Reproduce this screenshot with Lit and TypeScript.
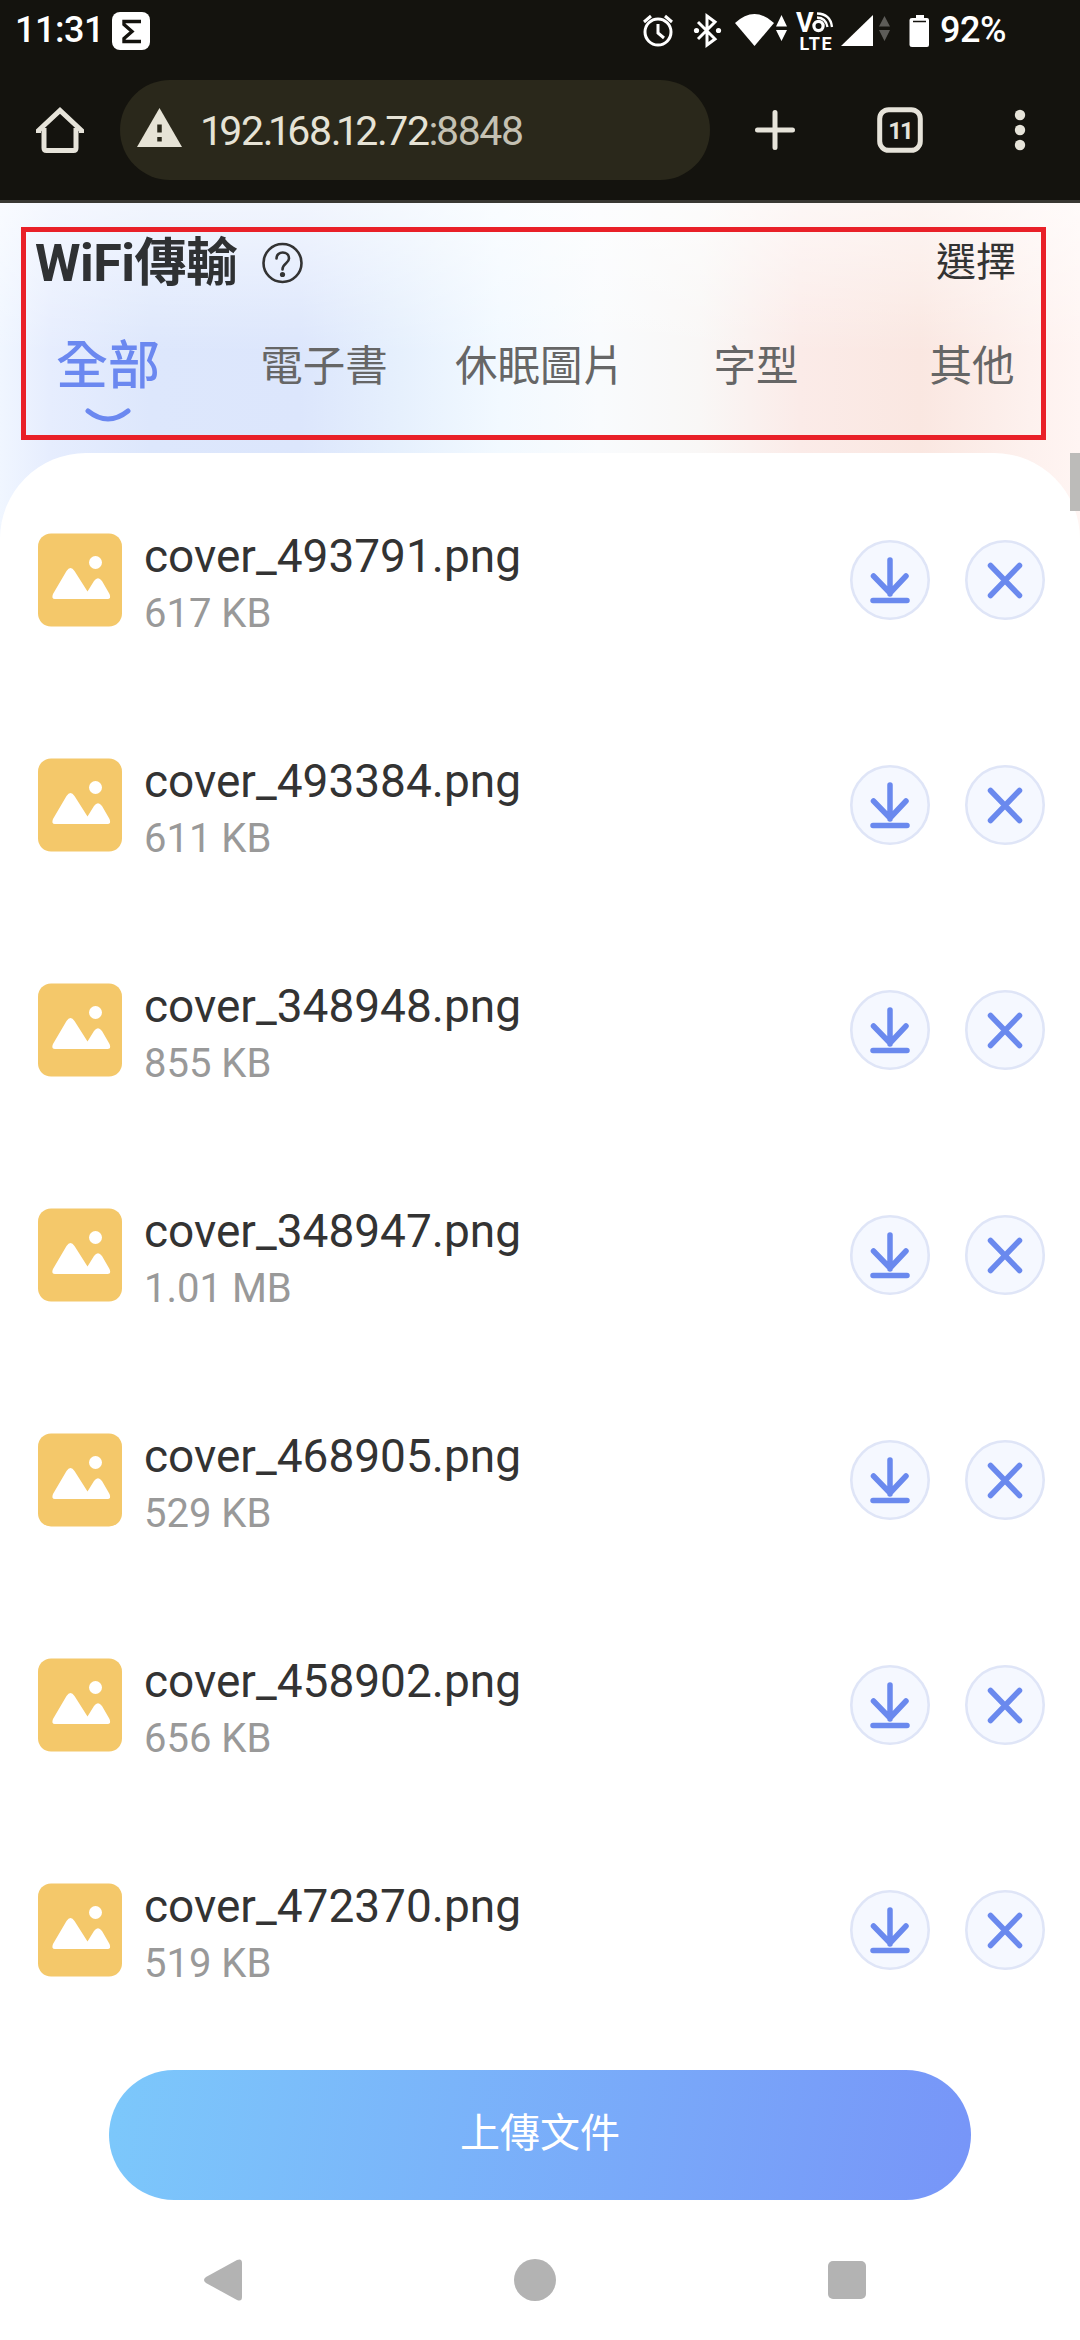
import { LitElement, html, css, svg } from "lit";
import { customElement, property } from "lit/decorators.js";

interface FileItem {
  name: string;
  size: string;
}

const FILES: FileItem[] = [
  { name: "cover_493791.png", size: "617 KB" },
  { name: "cover_493384.png", size: "611 KB" },
  { name: "cover_348948.png", size: "855 KB" },
  { name: "cover_348947.png", size: "1.01 MB" },
  { name: "cover_468905.png", size: "529 KB" },
  { name: "cover_458902.png", size: "656 KB" },
  { name: "cover_472370.png", size: "519 KB" },
];

const TABS = ["全部", "電子書", "休眠圖片", "字型", "其他"];

@customElement("status-bar")
class StatusBar extends LitElement {
  static styles = css`
    :host {
      display: flex;
      align-items: flex-start;
      height: 60px;
      color: #fff;
      font: 500 36px/42px Roboto, sans-serif;
    }
    .time {
      width: 97px;
      padding: 9px 0 0 15px;
      letter-spacing: -0.5px;
      white-space: nowrap;
    }
    .icons {
      display: block;
    }
    .lte {
      font: 700 18px Roboto, sans-serif;
    }
    .volte {
      font: 700 27px Roboto, sans-serif;
    }
    .level {
      padding: 9px 0 0 8px;
      letter-spacing: -0.5px;
    }
  `;
  render() {
    return html`
      <span class="time">11:31</span>
      <svg class="icons" width="820" height="60" viewBox="112 0 820 60" fill="#fff">
        <rect x="112" y="12" width="38" height="38" rx="8" />
        <path d="M141 21.500H124v3l8 7-8 7v3h17" fill="none" stroke="#14130e" stroke-width="3.400" />
        <g fill="none" stroke="#fff" stroke-width="3">
          <circle cx="658" cy="32" r="13" />
          <path d="M658 24v9l6 5M644 22l7-6M672 22l-7-6" />
        </g>
        <path d="M698 22l17 17-8 6V16l8 6-17 17" fill="none" stroke="#fff" stroke-width="3" />
        <circle cx="696.500" cy="30.500" r="2.600" />
        <circle cx="718.500" cy="30.500" r="2.600" />
        <path d="M735 23Q754.500 5 774 23L754.500 46z" />
        <path d="M781.500 15l5.500 11.500h-11zM781.500 41l5.500-11h-11z" />
        <text class="volte" x="796" y="31.500">V</text>
        <circle cx="818.500" cy="26" r="4.600" fill="none" stroke="#fff" stroke-width="3.200" />
        <path d="M817 17.500Q826 18 827.500 27M817 13.500Q830.500 14 832 27" fill="none" stroke="#fff" stroke-width="2.300" />
        <text class="lte" x="799.500" y="49.500" textLength="32">LTE</text>
        <path d="M873 15v31h-32z" />
        <path d="M884.500 16l5.500 10.500h-11zM884.500 41l5.500-11h-11z" fill="#5d5c58" />
        <path d="M916 15h8v3h3q2 0 2 2v25q0 2-2 2h-15q-2.500 0-2.500-2V20q0-2 2.500-2h4z" />
        <path d="M913 21.500h13" stroke="#14130e" stroke-width="1.500" />
      </svg>
      <span class="level">92%</span>
    `;
  }
}

@customElement("browser-bar")
class BrowserBar extends LitElement {
  static styles = css`
    :host {
      display: flex;
      align-items: center;
      height: 140px;
      border-bottom: 3px solid #393833;
      box-sizing: content-box;
    }
    .home {
      width: 120px;
      height: 100px;
    }
    .pill {
      display: flex;
      align-items: center;
      width: 590px;
      height: 100px;
      border-radius: 50px;
      background: #2a281b;
    }
    .warn {
      width: 80px;
      height: 100px;
    }
    .url {
      font: 400 41px/50px Roboto, sans-serif;
      color: #e6e3d6;
      letter-spacing: -1.400px;
      white-space: nowrap;
      padding: 2px 0 0 3px;
    }
    .one {
      margin-left: -3px;
      letter-spacing: -3.700px;
    }
    .dot {
      letter-spacing: -2.500px;
    }
    .port {
      color: #c4c1b3;
    }
    .actions {
      width: 370px;
      height: 100px;
    }
    .count {
      font: 700 24px Roboto, sans-serif;
    }
  `;
  private glyph(c: string) {
    if (c === "1") return html`<span class="one">1</span>`;
    if (c === "." || c === ":") return html`<span class="dot">${c}</span>`;
    return c;
  }
  render() {
    return html`
      <svg class="home" viewBox="0 80 120 100" fill="none" stroke="#e6e3d9" stroke-width="5">
        <path d="M44 128v20q0 2.500 2.500 2.500h27q2.500 0 2.500-2.500v-20" />
        <path d="M38.500 133v-2.500L60 110.500l21.500 20v2.500" />
      </svg>
      <div class="pill">
        <svg class="warn" viewBox="120 80 80 100">
          <path d="M159.500 108l22.500 39h-45z" fill="#e6e3d6" />
          <path d="M159.500 124.500v8M159.500 137v4.500" stroke="#2a281b" stroke-width="4.500" />
        </svg>
        <div class="url">${[..."192.168.12.72"].map((c) => this.glyph(c))}<span class="port">${[...":8848"].map((c) => this.glyph(c))}</span></div>
      </div>
      <svg class="actions" viewBox="710 80 370 100" fill="#e6e3d9">
        <path d="M757.500 130h35M775 112.500v35" stroke="#e6e3d9" stroke-width="5" stroke-linecap="round" />
        <rect x="879.700" y="109.700" width="40.600" height="40.600" rx="9" fill="none" stroke="#e6e3d9" stroke-width="5" />
        <text class="count" x="900" y="139" text-anchor="middle" letter-spacing="-2">11</text>
        <circle cx="1020" cy="115" r="5.200" />
        <circle cx="1020" cy="130" r="5.200" />
        <circle cx="1020" cy="145" r="5.200" />
      </svg>
    `;
  }
}

@customElement("file-row")
class FileRow extends LitElement {
  @property({ attribute: false }) file!: FileItem;
  static styles = css`
    :host {
      display: flex;
      align-items: center;
      height: 94px;
      padding: 0 35px 0 38px;
      font-family: Roboto, sans-serif;
    }
    svg {
      display: block;
      flex: none;
    }
    .info {
      flex: 1;
      padding: 6px 0 0 22px;
    }
    .name {
      font-size: 46px;
      line-height: 54px;
      color: #333;
    }
    .size {
      font-size: 40px;
      line-height: 46px;
      padding-top: 8px;
      color: #999;
    }
    .actions {
      display: flex;
      gap: 35px;
    }
  `;
  private button(glyph: unknown) {
    return html`<svg width="80" height="80" viewBox="0 0 80 80">
      <circle cx="40" cy="40" r="38.700" fill="#f5f8ff" stroke="#dfe5f7" stroke-width="2.600" />
      <g fill="none" stroke="#6a89ee" stroke-width="5.500" stroke-linecap="round" stroke-linejoin="round">${glyph}</g>
    </svg>`;
  }
  render() {
    return html`
      <svg width="84" height="94" viewBox="0 0 84 94">
        <rect y="0.500" width="84" height="93" rx="13" fill="#f4c86a" />
        <circle cx="57.500" cy="29.500" r="6.500" fill="#fff" />
        <path
          d="M17 66Q13 66 15 61L28.500 38Q32.500 32 36.500 38L49.500 58.500L56 48Q60 42.500 64 48L71.500 61Q73.500 66 69.500 66z"
          fill="#fff"
        />
      </svg>
      <div class="info">
        <div class="name">${this.file.name}</div>
        <div class="size">${this.file.size}</div>
      </div>
      <div class="actions">
        ${this.button(svg`<path d="M40 20v34M23.500 36L40 53L56 36M23 60.500h34" />`)}
        ${this.button(svg`<path d="M25.500 25.500l29 30M54.500 25.500l-29 30" />`)}
      </div>
    `;
  }
}

@customElement("app-root")
class AppRoot extends LitElement {
  static styles = css`
    :host {
      display: block;
      width: 1080px;
      height: 2340px;
      overflow: hidden;
      background: #fff;
      font-family: Roboto, "Noto Sans CJK TC", sans-serif;
    }
    .chrome {
      background: #14130e;
    }
    .page {
      position: relative;
      background:
        linear-gradient(to bottom, rgba(255, 255, 255, 0.6), rgba(255, 255, 255, 0) 150px),
        linear-gradient(
          to right,
          #f0f6ff 0,
          #e6edfe 50px,
          #dde7fc 150px,
          #dce6fc 300px,
          #e6f0fd 400px,
          #f2f9ff 500px,
          #f9fbfd 600px,
          #f9f7f6 700px,
          #fbebe8 800px,
          #fae7e1 920px,
          #fdf1ee 1030px,
          #fff5f3 1080px
        );
    }
    .header {
      height: 250px;
      display: flex;
      flex-direction: column;
    }
    .titlebar {
      display: flex;
      align-items: center;
      height: 120px;
      padding: 0 64px 0 35px;
    }
    .title {
      font-size: 52px;
      line-height: 60px;
      font-weight: 700;
      color: #2f3133;
      letter-spacing: -0.5px;
      padding-top: 2px;
    }
    .help {
      margin-left: 24px;
      display: block;
    }
    .select {
      margin-left: auto;
      font-size: 40px;
      line-height: 48px;
      color: #333;
    }
    .tabs {
      display: grid;
      grid-template-columns: repeat(5, 216px);
      height: 110px;
    }
    .tab {
      display: flex;
      flex-direction: column;
      align-items: center;
      font-size: 42.500px;
      line-height: 88px;
      color: #666;
      white-space: nowrap;
    }
    .active {
      font-size: 52px;
      font-weight: 500;
      color: #6b88f0;
    }
    .smile {
      margin-top: -4px;
    }
    .panel {
      height: 1887px;
      border-radius: 86px 86px 0 0;
      background: #fff;
      box-sizing: border-box;
      padding-top: 80px;
      display: flex;
      flex-direction: column;
    }
    .list {
      display: flex;
      flex-direction: column;
      gap: 131px;
    }
    .upload {
      margin: 93px 0 0 109px;
      width: 862px;
      height: 130px;
      border-radius: 65px;
      background: linear-gradient(100deg, #7cc8fb, #7795f8);
      color: #fff;
      font-size: 40px;
      line-height: 128px;
      text-align: center;
    }
    .nav {
      display: block;
      margin-top: 30px;
    }
    .frame {
      position: absolute;
      left: 21px;
      top: 24px;
      width: 1025px;
      height: 213px;
      box-sizing: border-box;
      border: 5px solid #e92028;
    }
    .scrollbar {
      position: absolute;
      right: 0;
      top: 250px;
      width: 10px;
      height: 58px;
      background: #bcbbb9;
    }
  `;
  render() {
    return html`
      <div class="chrome">
        <status-bar></status-bar>
        <browser-bar></browser-bar>
      </div>
      <div class="page">
        <div class="header">
          <div class="titlebar">
            <span class="title">WiFi傳輸</span>
            <svg class="help" width="42" height="42" viewBox="0 0 42 42" fill="none" stroke="#333" stroke-width="2.600">
              <circle cx="20.500" cy="21" r="19" />
              <path d="M14.500 16.500C14.500 8.500 27 8.500 27 16.500C27 21.500 20.500 21 20.500 27.500" stroke-width="2.600" stroke-linecap="round" />
              <circle cx="20.500" cy="32.500" r="2.600" fill="#333" stroke="none" />
            </svg>
            <span class="select">選擇</span>
          </div>
          <div class="tabs">
            ${TABS.map(
              (t, i) => html`<div class="tab ${i === 0 ? "active" : ""}">
                ${t}
                ${i === 0
                  ? html`<svg class="smile" width="46" height="18" viewBox="0 0 46 18">
                      <path d="M3 4Q23 20 43 4" fill="none" stroke="#6b88f0" stroke-width="5" stroke-linecap="round" />
                    </svg>`
                  : ""}
              </div>`
            )}
          </div>
        </div>
        <div class="panel">
          <div class="list">${FILES.map((f) => html`<file-row .file=${f}></file-row>`)}</div>
          <div class="upload">上傳文件</div>
          <svg class="nav" width="1080" height="100" viewBox="0 2230 1080 100" fill="#b3b3b3">
            <path d="M206 2277L237 2260Q242 2258 242 2263V2297Q242 2302 237 2300L206 2283Q202 2280 206 2277z" />
            <circle cx="535" cy="2280" r="21" />
            <rect x="828" y="2261" width="38" height="38" rx="5" />
          </svg>
        </div>
        <div class="frame"></div>
        <div class="scrollbar"></div>
      </div>
    `;
  }
}
